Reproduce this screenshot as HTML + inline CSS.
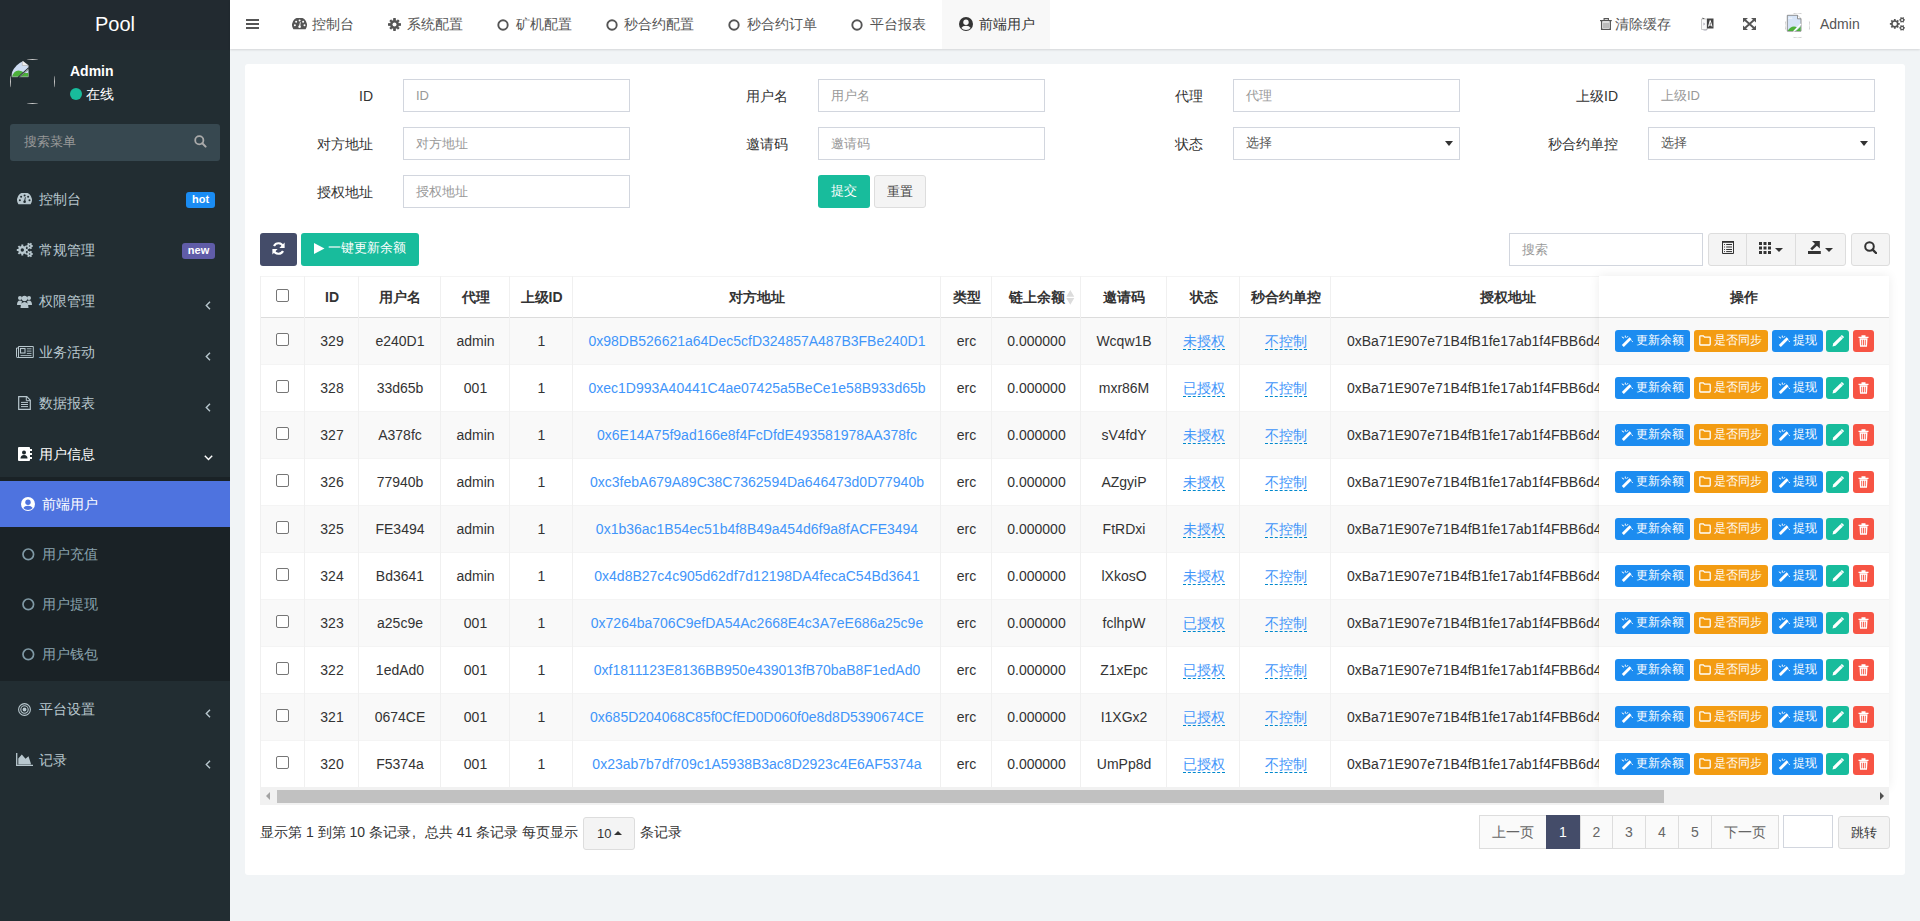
<!DOCTYPE html>
<html><head><meta charset="utf-8">
<style>
*{box-sizing:border-box;margin:0;padding:0}
html,body{width:1920px;height:921px;overflow:hidden}
body{font-family:"Liberation Sans",sans-serif;font-size:14px;color:#333;background:#f1f4f6;position:relative}
.a{position:absolute;white-space:nowrap}
svg{display:block}
/* sidebar */
#sb{position:absolute;left:0;top:0;width:230px;height:921px;background:#222d32}
#logo{position:absolute;left:0;top:0;width:230px;height:50px;background:#222a30;color:#fff;font-size:20px;text-align:center;line-height:48px}
.mi{position:absolute;left:0;width:230px;color:#b8c7ce;font-size:14px;line-height:20px}
.mi .t{position:absolute;left:39px;top:0}
.mi .ic{position:absolute;left:17px;top:3px}
.mi .ar{position:absolute;left:205px;top:10px}
.badge{position:absolute;color:#fff;font-size:11px;font-weight:bold;text-align:center;border-radius:3px;line-height:14px;height:16px}
/* header */
#hd{position:absolute;left:230px;top:0;width:1690px;height:49px;background:#fff;box-shadow:0 1px 2px rgba(0,0,0,.12)}
.hdt{top:14px;color:#555;font-size:14px;line-height:20px}
.tab{position:absolute;top:0;height:50px;color:#666;font-size:14px;line-height:50px}
/* panel */
#pn{position:absolute;left:245px;top:64px;width:1660px;height:811px;background:#fff;border-radius:3px}
.lbl{position:absolute;color:#333;font-size:14px;text-align:right;line-height:20px}
.inp{position:absolute;width:227px;height:33px;border:1px solid #d2d6de;background:#fff;color:#999;font-size:13px;line-height:31px;padding-left:12px}
.btn{border-radius:3px;text-align:center;line-height:31px;font-size:13px}
.th{text-align:center;font-weight:bold;color:#333;font-size:14px;line-height:20px}
.td{text-align:center;color:#333;font-size:14px;line-height:20px}
.link{color:#3f95fa}
.dl{color:#3f95fa;border-bottom:1px dashed #0088cc}
.cb{width:13px;height:13px;border:1px solid #767676;border-radius:2px;background:#fff}
.ob{position:absolute;height:22px;border-radius:3px;color:#fff;font-size:12px;line-height:22px}
.ob span{position:absolute;top:-1px}
.oi{position:absolute}
.pgb{top:815px;height:34px;border:1px solid #ddd;background:#fafafa;color:#666;text-align:center;line-height:32px;font-size:14px}
</style></head><body>
<div id="sb">
  <div id="logo">Pool</div>
  <!-- user panel -->
  <div class="a" style="left:10px;top:59px;width:45px;height:45px;border-radius:50%;overflow:hidden">
    <svg width="45" height="45" viewBox="0 0 45 45"><g stroke="#c8c8c8" stroke-width="1"><path d="M16.5 0.5H28.5M16.5 44.5H28.5"/><path d="M0.5 16.5V28.5M44.5 16.5V28.5"/></g><path d="M1.9 17.8V8 Q4 3.5 10 1.7 H12.3 L18.3 6.5 V17.8Z" fill="#cddcf2" stroke="#aaa" stroke-width="0.6"/><path d="M12.3 1.7 V6.5 H18.3" fill="#eee" stroke="#aaa" stroke-width="0.6"/><path d="M2 17.6 Q4 11.5 8.5 11.5 Q12 11.5 14.5 14 L18.2 14 V17.6Z" fill="#4caf3a"/><path d="M8 18.8 L19 8.8" stroke="#222d32" stroke-width="1.6"/><path d="M9.6 17.8 L18.3 9.9" stroke="#ddd" stroke-width="0.6"/></svg>
  </div>
  <div class="a" style="left:70px;top:62px;color:#fff;font-weight:bold;font-size:14px;line-height:18px">Admin</div>
  <div class="a" style="left:70px;top:88px;width:12px;height:12px;border-radius:50%;background:#18bc9c"></div>
  <div class="a" style="left:86px;top:84px;color:#fff;font-size:14px;line-height:20px">在线</div>
  <!-- search -->
  <div class="a" style="left:10px;top:124px;width:210px;height:37px;background:#374850;border-radius:3px"></div>
  <div class="a" style="left:24px;top:132px;color:#999;font-size:13px;line-height:20px">搜索菜单</div>
  <div class="a" style="left:194px;top:135px"><svg width="13" height="13" viewBox="0 0 13 13"><circle cx="5.3" cy="5.3" r="4.1" fill="none" stroke="#aaa" stroke-width="1.8"/><path d="M8.3 8.3 L11.6 11.6" stroke="#aaa" stroke-width="2" stroke-linecap="round"/></svg></div>
  <!-- menu -->
  <div class="mi" style="top:189px">
    <div class="ic" style="left:17px;top:4px"><svg width="15" height="12" viewBox="0 0 15 12"><path d="M1.4 11.3 A7.5 7.5 0 1 1 13.6 11.3 Z" fill="#b8c7ce"/><g fill="#222d32"><circle cx="2.9" cy="7.3" r="1"/><circle cx="4.1" cy="3.8" r="1"/><circle cx="7.6" cy="2.4" r="1"/><circle cx="11.1" cy="3.8" r="1"/><circle cx="12.5" cy="7.3" r="1"/><circle cx="7.6" cy="8.7" r="1.3"/><path d="M7 8.5 L8 4 L8.7 4.2 L8.2 8.7Z"/></g></svg></div>
    <div class="t">控制台</div>
    <div class="badge" style="left:186px;top:3px;width:29px;background:#1a8cf3">hot</div>
  </div>
  <div class="mi" style="top:240px">
    <div class="ic" style="left:16px;top:2px"><svg width="17" height="16" viewBox="0 0 17 16"><path fill-rule="evenodd" d="M10.29 7.04 L11.81 7.02 L11.81 8.98 L10.29 8.96 L9.80 10.14 L10.89 11.20 L9.50 12.59 L8.44 11.50 L7.26 11.99 L7.28 13.51 L5.32 13.51 L5.34 11.99 L4.16 11.50 L3.10 12.59 L1.71 11.20 L2.80 10.14 L2.31 8.96 L0.79 8.98 L0.79 7.02 L2.31 7.04 L2.80 5.86 L1.71 4.80 L3.10 3.41 L4.16 4.50 L5.34 4.01 L5.32 2.49 L7.28 2.49 L7.26 4.01 L8.44 4.50 L9.50 3.41 L10.89 4.80 L9.80 5.86Z M8.00 8.00 A1.7 1.7 0 1 0 4.60 8.00 A1.7 1.7 0 1 0 8.00 8.00Z M15.98 3.23 L16.91 3.21 L16.91 4.79 L15.98 4.77 L15.46 5.67 L15.94 6.47 L14.57 7.26 L14.12 6.45 L13.08 6.45 L12.63 7.26 L11.26 6.47 L11.74 5.67 L11.22 4.77 L10.29 4.79 L10.29 3.21 L11.22 3.23 L11.74 2.33 L11.26 1.53 L12.63 0.74 L13.08 1.55 L14.12 1.55 L14.57 0.74 L15.94 1.53 L15.46 2.33Z M14.40 4.00 A0.8 0.8 0 1 0 12.80 4.00 A0.8 0.8 0 1 0 14.40 4.00Z M15.98 11.23 L16.91 11.21 L16.91 12.79 L15.98 12.77 L15.46 13.67 L15.94 14.47 L14.57 15.26 L14.12 14.45 L13.08 14.45 L12.63 15.26 L11.26 14.47 L11.74 13.67 L11.22 12.77 L10.29 12.79 L10.29 11.21 L11.22 11.23 L11.74 10.33 L11.26 9.53 L12.63 8.74 L13.08 9.55 L14.12 9.55 L14.57 8.74 L15.94 9.53 L15.46 10.33Z M14.40 12.00 A0.8 0.8 0 1 0 12.80 12.00 A0.8 0.8 0 1 0 14.40 12.00Z" fill="#b8c7ce"/></svg></div>
    <div class="t">常规管理</div>
    <div class="badge" style="left:182px;top:3px;width:33px;background:#605ca8">new</div>
  </div>
  <div class="mi" style="top:291px">
    <div class="ic"><svg width="15" height="14" viewBox="0 0 15 14"><circle cx="3" cy="4" r="2" fill="#b8c7ce"/><circle cx="12" cy="4" r="2" fill="#b8c7ce"/><circle cx="7.5" cy="4.5" r="2.8" fill="#b8c7ce"/><path d="M0 11 Q0 6.5 3 6.5 Q4.5 6.5 5 7.5 L4 11Z M15 11 Q15 6.5 12 6.5 Q10.5 6.5 10 7.5 L11 11Z M3.5 14 Q3.5 8 7.5 8 Q11.5 8 11.5 14Z" fill="#b8c7ce"/></svg></div>
    <div class="t">权限管理</div>
    <div class="ar"><svg width="6" height="9" viewBox="0 0 6 9"><path d="M5 0.8 L1.3 4.5 L5 8.2" fill="none" stroke="#b8c7ce" stroke-width="1.4"/></svg></div>
  </div>
  <div class="mi" style="top:342px">
    <div class="ic" style="left:16px;top:4px"><svg width="18" height="12" viewBox="0 0 18 12"><path d="M2.5 0.5H17.3V11.5H1.2Q0.5 11.5 0.5 10.8V2H2.5" fill="none" stroke="#b8c7ce" stroke-width="1"/><path d="M2.5 0.5V11" stroke="#b8c7ce" stroke-width="1"/><rect x="4.5" y="2.5" width="4.5" height="4.5" fill="none" stroke="#b8c7ce" stroke-width="1.1"/><path d="M10.8 2.8H15.5M10.8 5.1H15.5M10.8 7.4H15.5M4.5 9.6H15.5" stroke="#b8c7ce" stroke-width="0.9"/></svg></div>
    <div class="t">业务活动</div>
    <div class="ar"><svg width="6" height="9" viewBox="0 0 6 9"><path d="M5 0.8 L1.3 4.5 L5 8.2" fill="none" stroke="#b8c7ce" stroke-width="1.4"/></svg></div>
  </div>
  <div class="mi" style="top:393px">
    <div class="ic" style="left:18px;top:3px"><svg width="13" height="14" viewBox="0 0 13 14"><path d="M0.7 0.7H8.8L12.3 4.2V13.3H0.7Z" fill="none" stroke="#b8c7ce" stroke-width="1.2"/><path d="M8.3 0.7V4.7H12.3" fill="none" stroke="#b8c7ce" stroke-width="1"/><path d="M3 6.4H10M3 8.5H10M3 10.6H10" stroke="#b8c7ce" stroke-width="1"/></svg></div>
    <div class="t">数据报表</div>
    <div class="ar"><svg width="6" height="9" viewBox="0 0 6 9"><path d="M5 0.8 L1.3 4.5 L5 8.2" fill="none" stroke="#b8c7ce" stroke-width="1.4"/></svg></div>
  </div>
    <div class="a" style="left:0;top:477px;width:230px;height:204px;background:#1a2226"></div>
  <div class="mi" style="top:444px;color:#fff">
    <div class="ic" style="left:18px;top:3px"><svg width="14" height="14" viewBox="0 0 14 14"><rect x="0" y="0" width="12" height="14" rx="1" fill="#fff"/><rect x="12" y="2" width="2" height="2" fill="#fff"/><rect x="12" y="6" width="2" height="2" fill="#fff"/><rect x="12" y="10" width="2" height="2" fill="#fff"/><circle cx="6" cy="5.5" r="2" fill="#1e282c"/><path d="M2.5 11.5 Q2.5 8 6 8 Q9.5 8 9.5 11.5Z" fill="#1e282c"/></svg></div>
    <div class="t">用户信息</div>
    <div class="ar" style="left:204px;top:11px"><svg width="9" height="6" viewBox="0 0 9 6"><path d="M0.8 0.8 L4.5 4.6 L8.2 0.8" fill="none" stroke="#fff" stroke-width="1.4"/></svg></div>
  </div>
  <div class="a" style="left:0;top:481px;width:230px;height:46px;background:#4e73df"></div>
  <div class="mi" style="top:494px;color:#fff">
    <div class="ic" style="left:21px;top:3px"><svg width="14" height="14" viewBox="0 0 14 14"><circle cx="7" cy="7" r="7" fill="#fff"/><circle cx="7" cy="5.2" r="2.7" fill="#4e73df"/><path d="M2.3 11.1 Q3.6 8.7 7 8.7 Q10.4 8.7 11.7 11.1 Q9.9 13.1 7 13.1 Q4.1 13.1 2.3 11.1Z" fill="#4e73df"/></svg></div>
    <div class="t" style="left:42px">前端用户</div>
  </div>
  <div class="mi" style="top:544px;color:#8aa4af">
    <div class="ic" style="left:21px;top:3px"><svg width="14" height="14" viewBox="0 0 14 14"><circle cx="7.3" cy="7.3" r="5.3" fill="none" stroke="#809aa6" stroke-width="1.7"/></svg></div>
    <div class="t" style="left:42px">用户充值</div>
  </div>
  <div class="mi" style="top:594px;color:#8aa4af">
    <div class="ic" style="left:21px;top:3px"><svg width="14" height="14" viewBox="0 0 14 14"><circle cx="7.3" cy="7.3" r="5.3" fill="none" stroke="#809aa6" stroke-width="1.7"/></svg></div>
    <div class="t" style="left:42px">用户提现</div>
  </div>
  <div class="mi" style="top:644px;color:#8aa4af">
    <div class="ic" style="left:21px;top:3px"><svg width="14" height="14" viewBox="0 0 14 14"><circle cx="7.3" cy="7.3" r="5.3" fill="none" stroke="#809aa6" stroke-width="1.7"/></svg></div>
    <div class="t" style="left:42px">用户钱包</div>
  </div>
  <div class="mi" style="top:699px">
    <div class="ic" style="left:18px;top:4px"><svg width="13" height="13" viewBox="0 0 13 13"><circle cx="6.5" cy="6.5" r="5.9" fill="none" stroke="#b8c7ce" stroke-width="1.1"/><circle cx="6.5" cy="6.5" r="3.7" fill="none" stroke="#b8c7ce" stroke-width="1.1"/><circle cx="6.5" cy="6.5" r="1.9" fill="#b8c7ce"/></svg></div>
    <div class="t">平台设置</div>
    <div class="ar"><svg width="6" height="9" viewBox="0 0 6 9"><path d="M5 0.8 L1.3 4.5 L5 8.2" fill="none" stroke="#b8c7ce" stroke-width="1.4"/></svg></div>
  </div>
  <div class="mi" style="top:750px">
    <div class="ic" style="left:16px;top:3px"><svg width="17" height="13" viewBox="0 0 17 13"><path d="M0.7 0V12.3H17" fill="none" stroke="#b8c7ce" stroke-width="1.3"/><path d="M2.3 11.5V5.5L5.8 1.5L9.5 5.8L12.5 3.2L14.8 10.2V11.5Z" fill="#b8c7ce"/></svg></div>
    <div class="t">记录</div>
    <div class="ar"><svg width="6" height="9" viewBox="0 0 6 9"><path d="M5 0.8 L1.3 4.5 L5 8.2" fill="none" stroke="#b8c7ce" stroke-width="1.4"/></svg></div>
  </div>
</div>
<div id="hd"></div>
<div id="hdc">
  <div class="a" style="left:246px;top:19px"><svg width="13" height="10" viewBox="0 0 13 10"><path d="M0 1H13M0 5H13M0 9H13" stroke="#555" stroke-width="2"/></svg></div>
  <div class="a" style="left:292px;top:18px"><svg width="15" height="12" viewBox="0 0 15 12"><path d="M1.4 11.3 A7.5 7.5 0 1 1 13.6 11.3 Z" fill="#555"/><g fill="#fff"><circle cx="2.9" cy="7.3" r="1"/><circle cx="4.1" cy="3.8" r="1"/><circle cx="7.6" cy="2.4" r="1"/><circle cx="11.1" cy="3.8" r="1"/><circle cx="12.5" cy="7.3" r="1"/><circle cx="7.6" cy="8.7" r="1.3"/><path d="M7 8.5 L8 4 L8.7 4.2 L8.2 8.7Z"/></g></svg></div>
  <div class="a hdt" style="left:312px">控制台</div>
  <div class="a" style="left:388px;top:18px"><svg width="13" height="13" viewBox="0 0 13 13"><g fill="#555"><circle cx="6.5" cy="6.5" r="4.6"/><path d="M5.3 0H7.7L8 2.5H5Z M5.3 13H7.7L8 10.5H5Z M0 5.3V7.7L2.5 8V5Z M13 5.3V7.7L10.5 8V5Z" /><path d="M1.9 1.9L3.6 1.5 L4.2 3.4 L3.4 4.2 L1.5 3.6Z M11.1 1.9L11.5 3.6 L9.6 4.2 L8.8 3.4 L9.4 1.5Z M1.9 11.1L1.5 9.4 L3.4 8.8 L4.2 9.6 L3.6 11.5Z M11.1 11.1L9.4 11.5 L8.8 9.6 L9.6 8.8 L11.5 9.4Z"/></g><circle cx="6.5" cy="6.5" r="2" fill="#fff"/></svg></div>
  <div class="a hdt" style="left:407px">系统配置</div>
  <div class="a" style="left:497px;top:19px"><svg width="12" height="12" viewBox="0 0 12 12"><circle cx="6" cy="6" r="4.7" fill="none" stroke="#555" stroke-width="1.9"/></svg></div>
  <div class="a hdt" style="left:516px">矿机配置</div>
  <div class="a" style="left:606px;top:19px"><svg width="12" height="12" viewBox="0 0 12 12"><circle cx="6" cy="6" r="4.7" fill="none" stroke="#555" stroke-width="1.9"/></svg></div>
  <div class="a hdt" style="left:624px">秒合约配置</div>
  <div class="a" style="left:728px;top:19px"><svg width="12" height="12" viewBox="0 0 12 12"><circle cx="6" cy="6" r="4.7" fill="none" stroke="#555" stroke-width="1.9"/></svg></div>
  <div class="a hdt" style="left:747px">秒合约订单</div>
  <div class="a" style="left:851px;top:19px"><svg width="12" height="12" viewBox="0 0 12 12"><circle cx="6" cy="6" r="4.7" fill="none" stroke="#555" stroke-width="1.9"/></svg></div>
  <div class="a hdt" style="left:870px">平台报表</div>
  <div class="a" style="left:942px;top:0;width:108px;height:49px;background:#f8f8f8"></div>
  <div class="a" style="left:959px;top:17px"><svg width="14" height="14" viewBox="0 0 14 14"><circle cx="7" cy="7" r="7" fill="#333"/><circle cx="7" cy="5.2" r="2.7" fill="#f8f8f8"/><path d="M2.3 11.1 Q3.6 8.7 7 8.7 Q10.4 8.7 11.7 11.1 Q9.9 13.1 7 13.1 Q4.1 13.1 2.3 11.1Z" fill="#f8f8f8"/></svg></div>
  <div class="a hdt" style="left:979px;color:#333">前端用户</div>
  <!-- right -->
  <div class="a" style="left:1600px;top:18px"><svg width="12" height="12" viewBox="0 0 12 12"><path d="M4.1 2V0.6H8.4V2" fill="none" stroke="#555" stroke-width="1.1"/><path d="M0 2.6H11.8" stroke="#555" stroke-width="1.2"/><path d="M1.6 3V11.3H10.3V3" fill="none" stroke="#555" stroke-width="1.3"/><path d="M4 4.5V10M6 4.5V10M8 4.5V10" stroke="#555" stroke-width="0.8"/></svg></div>
  <div class="a hdt" style="left:1615px">清除缓存</div>
  <div class="a" style="left:1701px;top:17px"><svg width="13" height="14" viewBox="0 0 13 14"><path d="M0.5 2H6V12.5H0.5Z" fill="#fafafa" stroke="#bbb" stroke-width="0.8"/><path d="M1.5 0.5L4 2H1.5Z" fill="#555"/><path d="M2 6L4 7L2 8" fill="none" stroke="#99a" stroke-width="0.6"/><path d="M6 1.5H12.5V11.5H6Z" fill="#444"/><path d="M7.5 9.5L9.2 3.5L11 9.5M8 8H10.5" fill="none" stroke="#fff" stroke-width="1"/><path d="M2.5 13.2H5.5L6 12" fill="none" stroke="#99a" stroke-width="0.6"/></svg></div>
  <div class="a" style="left:1743px;top:18px"><svg width="13" height="12" viewBox="0 0 13 12"><path d="M2 2L11 10M11 2L2 10" stroke="#555" stroke-width="1.9"/><path d="M0 0H5L0 4.6Z M13 0H8L13 4.6Z M0 12H5L0 7.4Z M13 12H8L13 7.4Z" fill="#555"/></svg></div>
  <div class="a" style="left:1785px;top:13px;width:25px;height:25px"><svg width="25" height="25" viewBox="0 0 25 25"><g fill="none" stroke="#c8c8c8" stroke-width="0.9"><path d="M8.5 0.6 A12 12 0 0 1 16.5 0.6"/><path d="M8.5 24.4 A12 12 0 0 0 16.5 24.4"/><path d="M0.6 8.5 A12 12 0 0 0 0.6 16.5"/><path d="M24.4 8.5 A12 12 0 0 1 24.4 16.5"/></g><path d="M2.3 2.3H12.5L16 5.8V18.2H2.3Z" fill="#d6e4f7" stroke="#777" stroke-width="0.8"/><path d="M12.5 2.3V5.8H16" fill="#fff" stroke="#777" stroke-width="0.8"/><path d="M3 5.5Q4 4 6 5Q6.5 4 7.5 5.5Z" fill="#fff"/><path d="M2.7 18 Q5 13.5 9 13.5 Q11 13.5 12 14.5 L8.5 18Z" fill="#4caf3a"/><path d="M11 18 L15.6 13.5 V18Z" fill="#4caf3a"/><path d="M8.5 18.6 L16 11" stroke="#fff" stroke-width="1.2"/></svg></div>
  <div class="a hdt" style="left:1820px">Admin</div>
  <div class="a" style="left:1889px;top:17px"><svg width="16" height="14" viewBox="0 0 16 14"><path fill-rule="evenodd" d="M9.50 6.01 L10.72 6.02 L10.72 7.78 L9.50 7.79 L9.04 8.89 L9.90 9.76 L8.66 11.00 L7.79 10.14 L6.69 10.60 L6.68 11.82 L4.92 11.82 L4.91 10.60 L3.81 10.14 L2.94 11.00 L1.70 9.76 L2.56 8.89 L2.10 7.79 L0.88 7.78 L0.88 6.02 L2.10 6.01 L2.56 4.91 L1.70 4.04 L2.94 2.80 L3.81 3.66 L4.91 3.20 L4.92 1.98 L6.68 1.98 L6.69 3.20 L7.79 3.66 L8.66 2.80 L9.90 4.04 L9.04 4.91Z M7.90 6.90 A2.1 2.1 0 1 0 3.70 6.90 A2.1 2.1 0 1 0 7.90 6.90Z M15.19 2.22 L15.92 2.22 L15.92 3.58 L15.19 3.58 L14.73 4.37 L15.10 5.00 L13.92 5.68 L13.56 5.05 L12.64 5.05 L12.28 5.68 L11.10 5.00 L11.47 4.37 L11.01 3.58 L10.28 3.58 L10.28 2.22 L11.01 2.22 L11.47 1.43 L11.10 0.80 L12.28 0.12 L12.64 0.75 L13.56 0.75 L13.92 0.12 L15.10 0.80 L14.73 1.43Z M14.10 2.90 A1.0 1.0 0 1 0 12.10 2.90 A1.0 1.0 0 1 0 14.10 2.90Z M15.19 10.22 L15.92 10.22 L15.92 11.58 L15.19 11.58 L14.73 12.37 L15.10 13.00 L13.92 13.68 L13.56 13.05 L12.64 13.05 L12.28 13.68 L11.10 13.00 L11.47 12.37 L11.01 11.58 L10.28 11.58 L10.28 10.22 L11.01 10.22 L11.47 9.43 L11.10 8.80 L12.28 8.12 L12.64 8.75 L13.56 8.75 L13.92 8.12 L15.10 8.80 L14.73 9.43Z M14.10 10.90 A1.0 1.0 0 1 0 12.10 10.90 A1.0 1.0 0 1 0 14.10 10.90Z" fill="#555"/></svg></div>
</div>
<div id="pn"></div>
<div id="pc">
<div class="a lbl" style="left:173px;width:200px;top:86px">ID</div>
<div class="a lbl" style="left:173px;width:200px;top:134px">对方地址</div>
<div class="a lbl" style="left:173px;width:200px;top:182px">授权地址</div>
<div class="a lbl" style="left:588px;width:200px;top:86px">用户名</div>
<div class="a lbl" style="left:588px;width:200px;top:134px">邀请码</div>
<div class="a lbl" style="left:1003px;width:200px;top:86px">代理</div>
<div class="a lbl" style="left:1003px;width:200px;top:134px">状态</div>
<div class="a lbl" style="left:1418px;width:200px;top:86px">上级ID</div>
<div class="a lbl" style="left:1418px;width:200px;top:134px">秒合约单控</div>
<div class="a inp" style="left:403px;top:79px">ID</div>
<div class="a inp" style="left:403px;top:127px">对方地址</div>
<div class="a inp" style="left:403px;top:175px">授权地址</div>
<div class="a inp" style="left:818px;top:79px">用户名</div>
<div class="a inp" style="left:818px;top:127px">邀请码</div>
<div class="a inp" style="left:1233px;top:79px">代理</div>
<div class="a inp" style="left:1648px;top:79px">上级ID</div>
<div class="a inp" style="left:1233px;top:127px;color:#555;line-height:29px">选择</div>
<div class="a" style="left:1445px;top:141px;width:0;height:0;border-left:4px solid transparent;border-right:4px solid transparent;border-top:5px solid #333"></div>
<div class="a inp" style="left:1648px;top:127px;color:#555;line-height:29px">选择</div>
<div class="a" style="left:1860px;top:141px;width:0;height:0;border-left:4px solid transparent;border-right:4px solid transparent;border-top:5px solid #333"></div>
<div class="a btn" style="left:818px;top:175px;width:52px;height:33px;background:#18bc9c;color:#fff">提交</div>
<div class="a btn" style="left:874px;top:175px;width:52px;height:33px;background:#f4f4f4;border:1px solid #ddd;color:#444">重置</div>
<div class="a btn" style="left:260px;top:233px;width:37px;height:33px;background:#444c69"></div>
<div class="a" style="left:272px;top:242px"><svg width="13" height="13" viewBox="0 0 13 13"><path d="M11.2 4.6 A5 5 0 0 0 2 4" fill="none" stroke="#fff" stroke-width="2.2"/><path d="M12.6 0.5 V6 H7.4Z" fill="#fff"/><path d="M1.8 8.4 A5 5 0 0 0 11 9" fill="none" stroke="#fff" stroke-width="2.2"/><path d="M0.4 12.5 V7 H5.6Z" fill="#fff"/></svg></div>
<div class="a btn" style="left:301px;top:233px;width:118px;height:33px;background:#18bc9c"></div>
<div class="a" style="left:314px;top:243px"><svg width="11" height="11" viewBox="0 0 11 11"><path d="M0 0 L10.5 5.5 L0 11Z" fill="#fff"/></svg></div>
<div class="a" style="left:328px;top:238px;color:#fff;font-size:13px;line-height:20px">一键更新余额</div>
<div class="a inp" style="left:1509px;top:233px;width:194px;height:33px">搜索</div>
<div class="a btn" style="left:1708px;top:233px;width:138px;height:33px;background:#f4f4f4;border:1px solid #ddd"></div>
<div class="a" style="left:1746px;top:234px;width:1px;height:31px;background:#ddd"></div>
<div class="a" style="left:1795px;top:234px;width:1px;height:31px;background:#ddd"></div>
<div class="a btn" style="left:1851px;top:233px;width:39px;height:33px;background:#f4f4f4;border:1px solid #ddd"></div>
<div class="a" style="left:1722px;top:241px"><svg width="12" height="13" viewBox="0 0 12 13"><path d="M0.5 0.8V12.5H11.5V0.8" fill="none" stroke="#333" stroke-width="1"/><rect x="0" y="0" width="12" height="1.8" fill="#333"/><path d="M2 3.5H3M2 6H3M2 8.5H3M2 10.6H3" stroke="#333" stroke-width="0.9"/><path d="M4.2 3.5H10M4.2 6H10M4.2 8.5H10M4.2 10.6H10" stroke="#333" stroke-width="1"/></svg></div>
<div class="a" style="left:1759px;top:242px"><svg width="12" height="12" viewBox="0 0 12 12"><g fill="#333"><rect x="0" y="0" width="3" height="3"/><rect x="4.5" y="0" width="3" height="3"/><rect x="9" y="0" width="3" height="3"/><rect x="0" y="4.5" width="3" height="3"/><rect x="4.5" y="4.5" width="3" height="3"/><rect x="9" y="4.5" width="3" height="3"/><rect x="0" y="9" width="3" height="3"/><rect x="4.5" y="9" width="3" height="3"/><rect x="9" y="9" width="3" height="3"/></g></svg></div>
<div class="a" style="left:1775px;top:248px;width:0;height:0;border-left:4px solid transparent;border-right:4px solid transparent;border-top:4px solid #333"></div>
<div class="a" style="left:1808px;top:241px"><svg width="13" height="13" viewBox="0 0 13 13"><path d="M0 10H12.8V13H0Z" fill="#333"/><path d="M4 0H11.8V7.6Z" fill="#333"/><path d="M3.2 8.4L8.5 3.2" stroke="#333" stroke-width="2.6"/></svg></div>
<div class="a" style="left:1825px;top:248px;width:0;height:0;border-left:4px solid transparent;border-right:4px solid transparent;border-top:4px solid #333"></div>
<div class="a" style="left:1864px;top:241px"><svg width="13" height="13" viewBox="0 0 13 13"><circle cx="5.5" cy="5.5" r="4.3" fill="none" stroke="#333" stroke-width="2"/><path d="M8.6 8.6 L12 12" stroke="#333" stroke-width="2.4" stroke-linecap="round"/></svg></div>
<div class="a" style="left:260px;top:276px;width:1629px;height:528px">
<div class="a" style="left:0;top:0;width:1629px;height:41px;background:#fff;border-top:1px solid #f4f4f4"></div>
<div class="a" style="left:0;top:41px;width:1629px;height:47px;background:#f9f9f9;border-top:1px solid #f4f4f4"></div>
<div class="a" style="left:0;top:88px;width:1629px;height:47px;background:#fff;border-top:1px solid #f4f4f4"></div>
<div class="a" style="left:0;top:135px;width:1629px;height:47px;background:#f9f9f9;border-top:1px solid #f4f4f4"></div>
<div class="a" style="left:0;top:182px;width:1629px;height:47px;background:#fff;border-top:1px solid #f4f4f4"></div>
<div class="a" style="left:0;top:229px;width:1629px;height:47px;background:#f9f9f9;border-top:1px solid #f4f4f4"></div>
<div class="a" style="left:0;top:276px;width:1629px;height:47px;background:#fff;border-top:1px solid #f4f4f4"></div>
<div class="a" style="left:0;top:323px;width:1629px;height:47px;background:#f9f9f9;border-top:1px solid #f4f4f4"></div>
<div class="a" style="left:0;top:370px;width:1629px;height:47px;background:#fff;border-top:1px solid #f4f4f4"></div>
<div class="a" style="left:0;top:417px;width:1629px;height:47px;background:#f9f9f9;border-top:1px solid #f4f4f4"></div>
<div class="a" style="left:0;top:464px;width:1629px;height:47px;background:#fff;border-top:1px solid #f4f4f4"></div>
<div class="a" style="left:0;top:41px;width:1629px;height:1px;background:#dcdcdc"></div>
<div class="a" style="left:0px;top:0;width:1px;height:511px;background:#f0f0f0"></div>
<div class="a" style="left:44px;top:0;width:1px;height:511px;background:#f0f0f0"></div>
<div class="a" style="left:98px;top:0;width:1px;height:511px;background:#f0f0f0"></div>
<div class="a" style="left:180px;top:0;width:1px;height:511px;background:#f0f0f0"></div>
<div class="a" style="left:249px;top:0;width:1px;height:511px;background:#f0f0f0"></div>
<div class="a" style="left:312px;top:0;width:1px;height:511px;background:#f0f0f0"></div>
<div class="a" style="left:680px;top:0;width:1px;height:511px;background:#f0f0f0"></div>
<div class="a" style="left:731px;top:0;width:1px;height:511px;background:#f0f0f0"></div>
<div class="a" style="left:820px;top:0;width:1px;height:511px;background:#f0f0f0"></div>
<div class="a" style="left:906px;top:0;width:1px;height:511px;background:#f0f0f0"></div>
<div class="a" style="left:979px;top:0;width:1px;height:511px;background:#f0f0f0"></div>
<div class="a" style="left:1070px;top:0;width:1px;height:511px;background:#f0f0f0"></div>
<div class="a th" style="left:45px;width:54px;top:11px">ID</div>
<div class="a th" style="left:99px;width:82px;top:11px">用户名</div>
<div class="a th" style="left:181px;width:69px;top:11px">代理</div>
<div class="a th" style="left:250px;width:63px;top:11px">上级ID</div>
<div class="a th" style="left:313px;width:368px;top:11px">对方地址</div>
<div class="a th" style="left:681px;width:51px;top:11px">类型</div>
<div class="a th" style="left:732px;width:89px;top:11px">链上余额</div>
<div class="a th" style="left:821px;width:86px;top:11px">邀请码</div>
<div class="a th" style="left:907px;width:73px;top:11px">状态</div>
<div class="a th" style="left:980px;width:91px;top:11px">秒合约单控</div>
<div class="a th" style="left:1071px;width:354px;top:11px">授权地址</div>
<div class="a cb" style="left:16px;top:13px"></div>
<div class="a" style="left:806px;top:14px"><svg width="9" height="15" viewBox="0 0 9 15"><path d="M0.3 6.8L4.3 0L8.3 6.8Z M0.3 8L8.3 8L4.3 14.8Z" fill="#dcdcdc"/></svg></div>
<div class="a cb" style="left:16px;top:57px"></div>
<div class="a td" style="left:45px;width:54px;top:55px">329</div>
<div class="a td" style="left:99px;width:82px;top:55px">e240D1</div>
<div class="a td" style="left:181px;width:69px;top:55px">admin</div>
<div class="a td" style="left:250px;width:63px;top:55px">1</div>
<div class="a td link" style="left:313px;width:368px;top:55px">0x98DB526621a64Dec5cfD324857A487B3FBe240D1</div>
<div class="a td" style="left:681px;width:51px;top:55px">erc</div>
<div class="a td" style="left:732px;width:89px;top:55px">0.000000</div>
<div class="a td" style="left:821px;width:86px;top:55px">Wcqw1B</div>
<div class="a td" style="left:907px;width:73px;top:55px"><span class="dl">未授权</span></div>
<div class="a td" style="left:980px;width:91px;top:55px"><span class="dl">不控制</span></div>
<div class="a td" style="left:1087px;top:55px;text-align:left">0xBa71E907e71B4fB1fe17ab1f4FBB6d4D2a1c7E9f</div>
<div class="a cb" style="left:16px;top:104px"></div>
<div class="a td" style="left:45px;width:54px;top:102px">328</div>
<div class="a td" style="left:99px;width:82px;top:102px">33d65b</div>
<div class="a td" style="left:181px;width:69px;top:102px">001</div>
<div class="a td" style="left:250px;width:63px;top:102px">1</div>
<div class="a td link" style="left:313px;width:368px;top:102px">0xec1D993A40441C4ae07425a5BeCe1e58B933d65b</div>
<div class="a td" style="left:681px;width:51px;top:102px">erc</div>
<div class="a td" style="left:732px;width:89px;top:102px">0.000000</div>
<div class="a td" style="left:821px;width:86px;top:102px">mxr86M</div>
<div class="a td" style="left:907px;width:73px;top:102px"><span class="dl">已授权</span></div>
<div class="a td" style="left:980px;width:91px;top:102px"><span class="dl">不控制</span></div>
<div class="a td" style="left:1087px;top:102px;text-align:left">0xBa71E907e71B4fB1fe17ab1f4FBB6d4D2a1c7E9f</div>
<div class="a cb" style="left:16px;top:151px"></div>
<div class="a td" style="left:45px;width:54px;top:149px">327</div>
<div class="a td" style="left:99px;width:82px;top:149px">A378fc</div>
<div class="a td" style="left:181px;width:69px;top:149px">admin</div>
<div class="a td" style="left:250px;width:63px;top:149px">1</div>
<div class="a td link" style="left:313px;width:368px;top:149px">0x6E14A75f9ad166e8f4FcDfdE493581978AA378fc</div>
<div class="a td" style="left:681px;width:51px;top:149px">erc</div>
<div class="a td" style="left:732px;width:89px;top:149px">0.000000</div>
<div class="a td" style="left:821px;width:86px;top:149px">sV4fdY</div>
<div class="a td" style="left:907px;width:73px;top:149px"><span class="dl">未授权</span></div>
<div class="a td" style="left:980px;width:91px;top:149px"><span class="dl">不控制</span></div>
<div class="a td" style="left:1087px;top:149px;text-align:left">0xBa71E907e71B4fB1fe17ab1f4FBB6d4D2a1c7E9f</div>
<div class="a cb" style="left:16px;top:198px"></div>
<div class="a td" style="left:45px;width:54px;top:196px">326</div>
<div class="a td" style="left:99px;width:82px;top:196px">77940b</div>
<div class="a td" style="left:181px;width:69px;top:196px">admin</div>
<div class="a td" style="left:250px;width:63px;top:196px">1</div>
<div class="a td link" style="left:313px;width:368px;top:196px">0xc3febA679A89C38C7362594Da646473d0D77940b</div>
<div class="a td" style="left:681px;width:51px;top:196px">erc</div>
<div class="a td" style="left:732px;width:89px;top:196px">0.000000</div>
<div class="a td" style="left:821px;width:86px;top:196px">AZgyiP</div>
<div class="a td" style="left:907px;width:73px;top:196px"><span class="dl">未授权</span></div>
<div class="a td" style="left:980px;width:91px;top:196px"><span class="dl">不控制</span></div>
<div class="a td" style="left:1087px;top:196px;text-align:left">0xBa71E907e71B4fB1fe17ab1f4FBB6d4D2a1c7E9f</div>
<div class="a cb" style="left:16px;top:245px"></div>
<div class="a td" style="left:45px;width:54px;top:243px">325</div>
<div class="a td" style="left:99px;width:82px;top:243px">FE3494</div>
<div class="a td" style="left:181px;width:69px;top:243px">admin</div>
<div class="a td" style="left:250px;width:63px;top:243px">1</div>
<div class="a td link" style="left:313px;width:368px;top:243px">0x1b36ac1B54ec51b4f8B49a454d6f9a8fACFE3494</div>
<div class="a td" style="left:681px;width:51px;top:243px">erc</div>
<div class="a td" style="left:732px;width:89px;top:243px">0.000000</div>
<div class="a td" style="left:821px;width:86px;top:243px">FtRDxi</div>
<div class="a td" style="left:907px;width:73px;top:243px"><span class="dl">未授权</span></div>
<div class="a td" style="left:980px;width:91px;top:243px"><span class="dl">不控制</span></div>
<div class="a td" style="left:1087px;top:243px;text-align:left">0xBa71E907e71B4fB1fe17ab1f4FBB6d4D2a1c7E9f</div>
<div class="a cb" style="left:16px;top:292px"></div>
<div class="a td" style="left:45px;width:54px;top:290px">324</div>
<div class="a td" style="left:99px;width:82px;top:290px">Bd3641</div>
<div class="a td" style="left:181px;width:69px;top:290px">admin</div>
<div class="a td" style="left:250px;width:63px;top:290px">1</div>
<div class="a td link" style="left:313px;width:368px;top:290px">0x4d8B27c4c905d62df7d12198DA4fecaC54Bd3641</div>
<div class="a td" style="left:681px;width:51px;top:290px">erc</div>
<div class="a td" style="left:732px;width:89px;top:290px">0.000000</div>
<div class="a td" style="left:821px;width:86px;top:290px">lXkosO</div>
<div class="a td" style="left:907px;width:73px;top:290px"><span class="dl">未授权</span></div>
<div class="a td" style="left:980px;width:91px;top:290px"><span class="dl">不控制</span></div>
<div class="a td" style="left:1087px;top:290px;text-align:left">0xBa71E907e71B4fB1fe17ab1f4FBB6d4D2a1c7E9f</div>
<div class="a cb" style="left:16px;top:339px"></div>
<div class="a td" style="left:45px;width:54px;top:337px">323</div>
<div class="a td" style="left:99px;width:82px;top:337px">a25c9e</div>
<div class="a td" style="left:181px;width:69px;top:337px">001</div>
<div class="a td" style="left:250px;width:63px;top:337px">1</div>
<div class="a td link" style="left:313px;width:368px;top:337px">0x7264ba706C9efDA54Ac2668E4c3A7eE686a25c9e</div>
<div class="a td" style="left:681px;width:51px;top:337px">erc</div>
<div class="a td" style="left:732px;width:89px;top:337px">0.000000</div>
<div class="a td" style="left:821px;width:86px;top:337px">fclhpW</div>
<div class="a td" style="left:907px;width:73px;top:337px"><span class="dl">已授权</span></div>
<div class="a td" style="left:980px;width:91px;top:337px"><span class="dl">不控制</span></div>
<div class="a td" style="left:1087px;top:337px;text-align:left">0xBa71E907e71B4fB1fe17ab1f4FBB6d4D2a1c7E9f</div>
<div class="a cb" style="left:16px;top:386px"></div>
<div class="a td" style="left:45px;width:54px;top:384px">322</div>
<div class="a td" style="left:99px;width:82px;top:384px">1edAd0</div>
<div class="a td" style="left:181px;width:69px;top:384px">001</div>
<div class="a td" style="left:250px;width:63px;top:384px">1</div>
<div class="a td link" style="left:313px;width:368px;top:384px">0xf1811123E8136BB950e439013fB70baB8F1edAd0</div>
<div class="a td" style="left:681px;width:51px;top:384px">erc</div>
<div class="a td" style="left:732px;width:89px;top:384px">0.000000</div>
<div class="a td" style="left:821px;width:86px;top:384px">Z1xEpc</div>
<div class="a td" style="left:907px;width:73px;top:384px"><span class="dl">已授权</span></div>
<div class="a td" style="left:980px;width:91px;top:384px"><span class="dl">不控制</span></div>
<div class="a td" style="left:1087px;top:384px;text-align:left">0xBa71E907e71B4fB1fe17ab1f4FBB6d4D2a1c7E9f</div>
<div class="a cb" style="left:16px;top:433px"></div>
<div class="a td" style="left:45px;width:54px;top:431px">321</div>
<div class="a td" style="left:99px;width:82px;top:431px">0674CE</div>
<div class="a td" style="left:181px;width:69px;top:431px">001</div>
<div class="a td" style="left:250px;width:63px;top:431px">1</div>
<div class="a td link" style="left:313px;width:368px;top:431px">0x685D204068C85f0CfED0D060f0e8d8D5390674CE</div>
<div class="a td" style="left:681px;width:51px;top:431px">erc</div>
<div class="a td" style="left:732px;width:89px;top:431px">0.000000</div>
<div class="a td" style="left:821px;width:86px;top:431px">I1XGx2</div>
<div class="a td" style="left:907px;width:73px;top:431px"><span class="dl">已授权</span></div>
<div class="a td" style="left:980px;width:91px;top:431px"><span class="dl">不控制</span></div>
<div class="a td" style="left:1087px;top:431px;text-align:left">0xBa71E907e71B4fB1fe17ab1f4FBB6d4D2a1c7E9f</div>
<div class="a cb" style="left:16px;top:480px"></div>
<div class="a td" style="left:45px;width:54px;top:478px">320</div>
<div class="a td" style="left:99px;width:82px;top:478px">F5374a</div>
<div class="a td" style="left:181px;width:69px;top:478px">001</div>
<div class="a td" style="left:250px;width:63px;top:478px">1</div>
<div class="a td link" style="left:313px;width:368px;top:478px">0x23ab7b7df709c1A5938B3ac8D2923c4E6AF5374a</div>
<div class="a td" style="left:681px;width:51px;top:478px">erc</div>
<div class="a td" style="left:732px;width:89px;top:478px">0.000000</div>
<div class="a td" style="left:821px;width:86px;top:478px">UmPp8d</div>
<div class="a td" style="left:907px;width:73px;top:478px"><span class="dl">已授权</span></div>
<div class="a td" style="left:980px;width:91px;top:478px"><span class="dl">不控制</span></div>
<div class="a td" style="left:1087px;top:478px;text-align:left">0xBa71E907e71B4fB1fe17ab1f4FBB6d4D2a1c7E9f</div>
<div class="a" style="left:1339px;top:0;width:290px;height:511px;box-shadow:0 0 10px rgba(0,0,0,.08);background:#fff">
<div class="a" style="left:0;top:0;width:290px;height:41px;background:#fff"></div>
<div class="a" style="left:0;top:41px;width:290px;height:47px;background:#f9f9f9;border-top:1px solid #f4f4f4"></div>
<div class="a" style="left:0;top:88px;width:290px;height:47px;background:#fff;border-top:1px solid #f4f4f4"></div>
<div class="a" style="left:0;top:135px;width:290px;height:47px;background:#f9f9f9;border-top:1px solid #f4f4f4"></div>
<div class="a" style="left:0;top:182px;width:290px;height:47px;background:#fff;border-top:1px solid #f4f4f4"></div>
<div class="a" style="left:0;top:229px;width:290px;height:47px;background:#f9f9f9;border-top:1px solid #f4f4f4"></div>
<div class="a" style="left:0;top:276px;width:290px;height:47px;background:#fff;border-top:1px solid #f4f4f4"></div>
<div class="a" style="left:0;top:323px;width:290px;height:47px;background:#f9f9f9;border-top:1px solid #f4f4f4"></div>
<div class="a" style="left:0;top:370px;width:290px;height:47px;background:#fff;border-top:1px solid #f4f4f4"></div>
<div class="a" style="left:0;top:417px;width:290px;height:47px;background:#f9f9f9;border-top:1px solid #f4f4f4"></div>
<div class="a" style="left:0;top:464px;width:290px;height:47px;background:#fff;border-top:1px solid #f4f4f4"></div>
<div class="a" style="left:0;top:41px;width:290px;height:1px;background:#dcdcdc"></div>
<div class="a th" style="left:0;width:290px;top:11px">操作</div>
<div class="a ob" style="left:16px;top:54px;width:75px;background:#1c8cf0"><svg class="oi" style="left:6px;top:5px" width="13" height="12" viewBox="0 0 13 12"><path d="M1.8 11 L9.6 3.2" stroke="#fff" stroke-width="2.8"/><path d="M0.8 1.8L3 3.2M4.3 0.6V2.6M7 1.2L5.6 2.8M10.4 5.6L11.8 6.8" stroke="#fff" stroke-width="1"/></svg><span style="left:21px">更新余额</span></div>
<div class="a ob" style="left:95px;top:54px;width:74px;background:#f39c12"><svg class="oi" style="left:5px;top:5px" width="12" height="11" viewBox="0 0 12 11"><path d="M0.8 1.5Q0.8 0.8 1.5 0.8H4.3L5.6 2.2H10.5Q11.2 2.2 11.2 2.9V9.3Q11.2 10 10.5 10H1.5Q0.8 10 0.8 9.3Z" fill="none" stroke="#fff" stroke-width="1.3"/></svg><span style="left:20px">是否同步</span></div>
<div class="a ob" style="left:173px;top:54px;width:51px;background:#1c8cf0"><svg class="oi" style="left:6px;top:5px" width="13" height="12" viewBox="0 0 13 12"><path d="M1.8 11 L9.6 3.2" stroke="#fff" stroke-width="2.8"/><path d="M0.8 1.8L3 3.2M4.3 0.6V2.6M7 1.2L5.6 2.8M10.4 5.6L11.8 6.8" stroke="#fff" stroke-width="1"/></svg><span style="left:21px">提现</span></div>
<div class="a ob" style="left:227px;top:54px;width:23px;background:#18bc9c"><svg class="oi" style="left:6px;top:5px" width="12" height="12" viewBox="0 0 12 12"><path d="M0.5 11.5L1.2 8.5L8.5 1.2L10.8 3.5L3.5 10.8Z" fill="#fff"/><path d="M9.3 0.5L11.5 2.7" stroke="#fff" stroke-width="1.6"/></svg></div>
<div class="a ob" style="left:254px;top:54px;width:21px;background:#f75444"><svg class="oi" style="left:5px;top:5px" width="11" height="12" viewBox="0 0 11 12"><path d="M0.5 1.8H10.5V3H0.5Z M3.5 0.3H7.5V1.8H3.5Z M1.5 3.3H9.5L9 11.8H2Z" fill="#fff"/><path d="M3.7 4.8V10.3M5.5 4.8V10.3M7.3 4.8V10.3" stroke="#f75444" stroke-width="0.9"/></svg></div>
<div class="a ob" style="left:16px;top:101px;width:75px;background:#1c8cf0"><svg class="oi" style="left:6px;top:5px" width="13" height="12" viewBox="0 0 13 12"><path d="M1.8 11 L9.6 3.2" stroke="#fff" stroke-width="2.8"/><path d="M0.8 1.8L3 3.2M4.3 0.6V2.6M7 1.2L5.6 2.8M10.4 5.6L11.8 6.8" stroke="#fff" stroke-width="1"/></svg><span style="left:21px">更新余额</span></div>
<div class="a ob" style="left:95px;top:101px;width:74px;background:#f39c12"><svg class="oi" style="left:5px;top:5px" width="12" height="11" viewBox="0 0 12 11"><path d="M0.8 1.5Q0.8 0.8 1.5 0.8H4.3L5.6 2.2H10.5Q11.2 2.2 11.2 2.9V9.3Q11.2 10 10.5 10H1.5Q0.8 10 0.8 9.3Z" fill="none" stroke="#fff" stroke-width="1.3"/></svg><span style="left:20px">是否同步</span></div>
<div class="a ob" style="left:173px;top:101px;width:51px;background:#1c8cf0"><svg class="oi" style="left:6px;top:5px" width="13" height="12" viewBox="0 0 13 12"><path d="M1.8 11 L9.6 3.2" stroke="#fff" stroke-width="2.8"/><path d="M0.8 1.8L3 3.2M4.3 0.6V2.6M7 1.2L5.6 2.8M10.4 5.6L11.8 6.8" stroke="#fff" stroke-width="1"/></svg><span style="left:21px">提现</span></div>
<div class="a ob" style="left:227px;top:101px;width:23px;background:#18bc9c"><svg class="oi" style="left:6px;top:5px" width="12" height="12" viewBox="0 0 12 12"><path d="M0.5 11.5L1.2 8.5L8.5 1.2L10.8 3.5L3.5 10.8Z" fill="#fff"/><path d="M9.3 0.5L11.5 2.7" stroke="#fff" stroke-width="1.6"/></svg></div>
<div class="a ob" style="left:254px;top:101px;width:21px;background:#f75444"><svg class="oi" style="left:5px;top:5px" width="11" height="12" viewBox="0 0 11 12"><path d="M0.5 1.8H10.5V3H0.5Z M3.5 0.3H7.5V1.8H3.5Z M1.5 3.3H9.5L9 11.8H2Z" fill="#fff"/><path d="M3.7 4.8V10.3M5.5 4.8V10.3M7.3 4.8V10.3" stroke="#f75444" stroke-width="0.9"/></svg></div>
<div class="a ob" style="left:16px;top:148px;width:75px;background:#1c8cf0"><svg class="oi" style="left:6px;top:5px" width="13" height="12" viewBox="0 0 13 12"><path d="M1.8 11 L9.6 3.2" stroke="#fff" stroke-width="2.8"/><path d="M0.8 1.8L3 3.2M4.3 0.6V2.6M7 1.2L5.6 2.8M10.4 5.6L11.8 6.8" stroke="#fff" stroke-width="1"/></svg><span style="left:21px">更新余额</span></div>
<div class="a ob" style="left:95px;top:148px;width:74px;background:#f39c12"><svg class="oi" style="left:5px;top:5px" width="12" height="11" viewBox="0 0 12 11"><path d="M0.8 1.5Q0.8 0.8 1.5 0.8H4.3L5.6 2.2H10.5Q11.2 2.2 11.2 2.9V9.3Q11.2 10 10.5 10H1.5Q0.8 10 0.8 9.3Z" fill="none" stroke="#fff" stroke-width="1.3"/></svg><span style="left:20px">是否同步</span></div>
<div class="a ob" style="left:173px;top:148px;width:51px;background:#1c8cf0"><svg class="oi" style="left:6px;top:5px" width="13" height="12" viewBox="0 0 13 12"><path d="M1.8 11 L9.6 3.2" stroke="#fff" stroke-width="2.8"/><path d="M0.8 1.8L3 3.2M4.3 0.6V2.6M7 1.2L5.6 2.8M10.4 5.6L11.8 6.8" stroke="#fff" stroke-width="1"/></svg><span style="left:21px">提现</span></div>
<div class="a ob" style="left:227px;top:148px;width:23px;background:#18bc9c"><svg class="oi" style="left:6px;top:5px" width="12" height="12" viewBox="0 0 12 12"><path d="M0.5 11.5L1.2 8.5L8.5 1.2L10.8 3.5L3.5 10.8Z" fill="#fff"/><path d="M9.3 0.5L11.5 2.7" stroke="#fff" stroke-width="1.6"/></svg></div>
<div class="a ob" style="left:254px;top:148px;width:21px;background:#f75444"><svg class="oi" style="left:5px;top:5px" width="11" height="12" viewBox="0 0 11 12"><path d="M0.5 1.8H10.5V3H0.5Z M3.5 0.3H7.5V1.8H3.5Z M1.5 3.3H9.5L9 11.8H2Z" fill="#fff"/><path d="M3.7 4.8V10.3M5.5 4.8V10.3M7.3 4.8V10.3" stroke="#f75444" stroke-width="0.9"/></svg></div>
<div class="a ob" style="left:16px;top:195px;width:75px;background:#1c8cf0"><svg class="oi" style="left:6px;top:5px" width="13" height="12" viewBox="0 0 13 12"><path d="M1.8 11 L9.6 3.2" stroke="#fff" stroke-width="2.8"/><path d="M0.8 1.8L3 3.2M4.3 0.6V2.6M7 1.2L5.6 2.8M10.4 5.6L11.8 6.8" stroke="#fff" stroke-width="1"/></svg><span style="left:21px">更新余额</span></div>
<div class="a ob" style="left:95px;top:195px;width:74px;background:#f39c12"><svg class="oi" style="left:5px;top:5px" width="12" height="11" viewBox="0 0 12 11"><path d="M0.8 1.5Q0.8 0.8 1.5 0.8H4.3L5.6 2.2H10.5Q11.2 2.2 11.2 2.9V9.3Q11.2 10 10.5 10H1.5Q0.8 10 0.8 9.3Z" fill="none" stroke="#fff" stroke-width="1.3"/></svg><span style="left:20px">是否同步</span></div>
<div class="a ob" style="left:173px;top:195px;width:51px;background:#1c8cf0"><svg class="oi" style="left:6px;top:5px" width="13" height="12" viewBox="0 0 13 12"><path d="M1.8 11 L9.6 3.2" stroke="#fff" stroke-width="2.8"/><path d="M0.8 1.8L3 3.2M4.3 0.6V2.6M7 1.2L5.6 2.8M10.4 5.6L11.8 6.8" stroke="#fff" stroke-width="1"/></svg><span style="left:21px">提现</span></div>
<div class="a ob" style="left:227px;top:195px;width:23px;background:#18bc9c"><svg class="oi" style="left:6px;top:5px" width="12" height="12" viewBox="0 0 12 12"><path d="M0.5 11.5L1.2 8.5L8.5 1.2L10.8 3.5L3.5 10.8Z" fill="#fff"/><path d="M9.3 0.5L11.5 2.7" stroke="#fff" stroke-width="1.6"/></svg></div>
<div class="a ob" style="left:254px;top:195px;width:21px;background:#f75444"><svg class="oi" style="left:5px;top:5px" width="11" height="12" viewBox="0 0 11 12"><path d="M0.5 1.8H10.5V3H0.5Z M3.5 0.3H7.5V1.8H3.5Z M1.5 3.3H9.5L9 11.8H2Z" fill="#fff"/><path d="M3.7 4.8V10.3M5.5 4.8V10.3M7.3 4.8V10.3" stroke="#f75444" stroke-width="0.9"/></svg></div>
<div class="a ob" style="left:16px;top:242px;width:75px;background:#1c8cf0"><svg class="oi" style="left:6px;top:5px" width="13" height="12" viewBox="0 0 13 12"><path d="M1.8 11 L9.6 3.2" stroke="#fff" stroke-width="2.8"/><path d="M0.8 1.8L3 3.2M4.3 0.6V2.6M7 1.2L5.6 2.8M10.4 5.6L11.8 6.8" stroke="#fff" stroke-width="1"/></svg><span style="left:21px">更新余额</span></div>
<div class="a ob" style="left:95px;top:242px;width:74px;background:#f39c12"><svg class="oi" style="left:5px;top:5px" width="12" height="11" viewBox="0 0 12 11"><path d="M0.8 1.5Q0.8 0.8 1.5 0.8H4.3L5.6 2.2H10.5Q11.2 2.2 11.2 2.9V9.3Q11.2 10 10.5 10H1.5Q0.8 10 0.8 9.3Z" fill="none" stroke="#fff" stroke-width="1.3"/></svg><span style="left:20px">是否同步</span></div>
<div class="a ob" style="left:173px;top:242px;width:51px;background:#1c8cf0"><svg class="oi" style="left:6px;top:5px" width="13" height="12" viewBox="0 0 13 12"><path d="M1.8 11 L9.6 3.2" stroke="#fff" stroke-width="2.8"/><path d="M0.8 1.8L3 3.2M4.3 0.6V2.6M7 1.2L5.6 2.8M10.4 5.6L11.8 6.8" stroke="#fff" stroke-width="1"/></svg><span style="left:21px">提现</span></div>
<div class="a ob" style="left:227px;top:242px;width:23px;background:#18bc9c"><svg class="oi" style="left:6px;top:5px" width="12" height="12" viewBox="0 0 12 12"><path d="M0.5 11.5L1.2 8.5L8.5 1.2L10.8 3.5L3.5 10.8Z" fill="#fff"/><path d="M9.3 0.5L11.5 2.7" stroke="#fff" stroke-width="1.6"/></svg></div>
<div class="a ob" style="left:254px;top:242px;width:21px;background:#f75444"><svg class="oi" style="left:5px;top:5px" width="11" height="12" viewBox="0 0 11 12"><path d="M0.5 1.8H10.5V3H0.5Z M3.5 0.3H7.5V1.8H3.5Z M1.5 3.3H9.5L9 11.8H2Z" fill="#fff"/><path d="M3.7 4.8V10.3M5.5 4.8V10.3M7.3 4.8V10.3" stroke="#f75444" stroke-width="0.9"/></svg></div>
<div class="a ob" style="left:16px;top:289px;width:75px;background:#1c8cf0"><svg class="oi" style="left:6px;top:5px" width="13" height="12" viewBox="0 0 13 12"><path d="M1.8 11 L9.6 3.2" stroke="#fff" stroke-width="2.8"/><path d="M0.8 1.8L3 3.2M4.3 0.6V2.6M7 1.2L5.6 2.8M10.4 5.6L11.8 6.8" stroke="#fff" stroke-width="1"/></svg><span style="left:21px">更新余额</span></div>
<div class="a ob" style="left:95px;top:289px;width:74px;background:#f39c12"><svg class="oi" style="left:5px;top:5px" width="12" height="11" viewBox="0 0 12 11"><path d="M0.8 1.5Q0.8 0.8 1.5 0.8H4.3L5.6 2.2H10.5Q11.2 2.2 11.2 2.9V9.3Q11.2 10 10.5 10H1.5Q0.8 10 0.8 9.3Z" fill="none" stroke="#fff" stroke-width="1.3"/></svg><span style="left:20px">是否同步</span></div>
<div class="a ob" style="left:173px;top:289px;width:51px;background:#1c8cf0"><svg class="oi" style="left:6px;top:5px" width="13" height="12" viewBox="0 0 13 12"><path d="M1.8 11 L9.6 3.2" stroke="#fff" stroke-width="2.8"/><path d="M0.8 1.8L3 3.2M4.3 0.6V2.6M7 1.2L5.6 2.8M10.4 5.6L11.8 6.8" stroke="#fff" stroke-width="1"/></svg><span style="left:21px">提现</span></div>
<div class="a ob" style="left:227px;top:289px;width:23px;background:#18bc9c"><svg class="oi" style="left:6px;top:5px" width="12" height="12" viewBox="0 0 12 12"><path d="M0.5 11.5L1.2 8.5L8.5 1.2L10.8 3.5L3.5 10.8Z" fill="#fff"/><path d="M9.3 0.5L11.5 2.7" stroke="#fff" stroke-width="1.6"/></svg></div>
<div class="a ob" style="left:254px;top:289px;width:21px;background:#f75444"><svg class="oi" style="left:5px;top:5px" width="11" height="12" viewBox="0 0 11 12"><path d="M0.5 1.8H10.5V3H0.5Z M3.5 0.3H7.5V1.8H3.5Z M1.5 3.3H9.5L9 11.8H2Z" fill="#fff"/><path d="M3.7 4.8V10.3M5.5 4.8V10.3M7.3 4.8V10.3" stroke="#f75444" stroke-width="0.9"/></svg></div>
<div class="a ob" style="left:16px;top:336px;width:75px;background:#1c8cf0"><svg class="oi" style="left:6px;top:5px" width="13" height="12" viewBox="0 0 13 12"><path d="M1.8 11 L9.6 3.2" stroke="#fff" stroke-width="2.8"/><path d="M0.8 1.8L3 3.2M4.3 0.6V2.6M7 1.2L5.6 2.8M10.4 5.6L11.8 6.8" stroke="#fff" stroke-width="1"/></svg><span style="left:21px">更新余额</span></div>
<div class="a ob" style="left:95px;top:336px;width:74px;background:#f39c12"><svg class="oi" style="left:5px;top:5px" width="12" height="11" viewBox="0 0 12 11"><path d="M0.8 1.5Q0.8 0.8 1.5 0.8H4.3L5.6 2.2H10.5Q11.2 2.2 11.2 2.9V9.3Q11.2 10 10.5 10H1.5Q0.8 10 0.8 9.3Z" fill="none" stroke="#fff" stroke-width="1.3"/></svg><span style="left:20px">是否同步</span></div>
<div class="a ob" style="left:173px;top:336px;width:51px;background:#1c8cf0"><svg class="oi" style="left:6px;top:5px" width="13" height="12" viewBox="0 0 13 12"><path d="M1.8 11 L9.6 3.2" stroke="#fff" stroke-width="2.8"/><path d="M0.8 1.8L3 3.2M4.3 0.6V2.6M7 1.2L5.6 2.8M10.4 5.6L11.8 6.8" stroke="#fff" stroke-width="1"/></svg><span style="left:21px">提现</span></div>
<div class="a ob" style="left:227px;top:336px;width:23px;background:#18bc9c"><svg class="oi" style="left:6px;top:5px" width="12" height="12" viewBox="0 0 12 12"><path d="M0.5 11.5L1.2 8.5L8.5 1.2L10.8 3.5L3.5 10.8Z" fill="#fff"/><path d="M9.3 0.5L11.5 2.7" stroke="#fff" stroke-width="1.6"/></svg></div>
<div class="a ob" style="left:254px;top:336px;width:21px;background:#f75444"><svg class="oi" style="left:5px;top:5px" width="11" height="12" viewBox="0 0 11 12"><path d="M0.5 1.8H10.5V3H0.5Z M3.5 0.3H7.5V1.8H3.5Z M1.5 3.3H9.5L9 11.8H2Z" fill="#fff"/><path d="M3.7 4.8V10.3M5.5 4.8V10.3M7.3 4.8V10.3" stroke="#f75444" stroke-width="0.9"/></svg></div>
<div class="a ob" style="left:16px;top:383px;width:75px;background:#1c8cf0"><svg class="oi" style="left:6px;top:5px" width="13" height="12" viewBox="0 0 13 12"><path d="M1.8 11 L9.6 3.2" stroke="#fff" stroke-width="2.8"/><path d="M0.8 1.8L3 3.2M4.3 0.6V2.6M7 1.2L5.6 2.8M10.4 5.6L11.8 6.8" stroke="#fff" stroke-width="1"/></svg><span style="left:21px">更新余额</span></div>
<div class="a ob" style="left:95px;top:383px;width:74px;background:#f39c12"><svg class="oi" style="left:5px;top:5px" width="12" height="11" viewBox="0 0 12 11"><path d="M0.8 1.5Q0.8 0.8 1.5 0.8H4.3L5.6 2.2H10.5Q11.2 2.2 11.2 2.9V9.3Q11.2 10 10.5 10H1.5Q0.8 10 0.8 9.3Z" fill="none" stroke="#fff" stroke-width="1.3"/></svg><span style="left:20px">是否同步</span></div>
<div class="a ob" style="left:173px;top:383px;width:51px;background:#1c8cf0"><svg class="oi" style="left:6px;top:5px" width="13" height="12" viewBox="0 0 13 12"><path d="M1.8 11 L9.6 3.2" stroke="#fff" stroke-width="2.8"/><path d="M0.8 1.8L3 3.2M4.3 0.6V2.6M7 1.2L5.6 2.8M10.4 5.6L11.8 6.8" stroke="#fff" stroke-width="1"/></svg><span style="left:21px">提现</span></div>
<div class="a ob" style="left:227px;top:383px;width:23px;background:#18bc9c"><svg class="oi" style="left:6px;top:5px" width="12" height="12" viewBox="0 0 12 12"><path d="M0.5 11.5L1.2 8.5L8.5 1.2L10.8 3.5L3.5 10.8Z" fill="#fff"/><path d="M9.3 0.5L11.5 2.7" stroke="#fff" stroke-width="1.6"/></svg></div>
<div class="a ob" style="left:254px;top:383px;width:21px;background:#f75444"><svg class="oi" style="left:5px;top:5px" width="11" height="12" viewBox="0 0 11 12"><path d="M0.5 1.8H10.5V3H0.5Z M3.5 0.3H7.5V1.8H3.5Z M1.5 3.3H9.5L9 11.8H2Z" fill="#fff"/><path d="M3.7 4.8V10.3M5.5 4.8V10.3M7.3 4.8V10.3" stroke="#f75444" stroke-width="0.9"/></svg></div>
<div class="a ob" style="left:16px;top:430px;width:75px;background:#1c8cf0"><svg class="oi" style="left:6px;top:5px" width="13" height="12" viewBox="0 0 13 12"><path d="M1.8 11 L9.6 3.2" stroke="#fff" stroke-width="2.8"/><path d="M0.8 1.8L3 3.2M4.3 0.6V2.6M7 1.2L5.6 2.8M10.4 5.6L11.8 6.8" stroke="#fff" stroke-width="1"/></svg><span style="left:21px">更新余额</span></div>
<div class="a ob" style="left:95px;top:430px;width:74px;background:#f39c12"><svg class="oi" style="left:5px;top:5px" width="12" height="11" viewBox="0 0 12 11"><path d="M0.8 1.5Q0.8 0.8 1.5 0.8H4.3L5.6 2.2H10.5Q11.2 2.2 11.2 2.9V9.3Q11.2 10 10.5 10H1.5Q0.8 10 0.8 9.3Z" fill="none" stroke="#fff" stroke-width="1.3"/></svg><span style="left:20px">是否同步</span></div>
<div class="a ob" style="left:173px;top:430px;width:51px;background:#1c8cf0"><svg class="oi" style="left:6px;top:5px" width="13" height="12" viewBox="0 0 13 12"><path d="M1.8 11 L9.6 3.2" stroke="#fff" stroke-width="2.8"/><path d="M0.8 1.8L3 3.2M4.3 0.6V2.6M7 1.2L5.6 2.8M10.4 5.6L11.8 6.8" stroke="#fff" stroke-width="1"/></svg><span style="left:21px">提现</span></div>
<div class="a ob" style="left:227px;top:430px;width:23px;background:#18bc9c"><svg class="oi" style="left:6px;top:5px" width="12" height="12" viewBox="0 0 12 12"><path d="M0.5 11.5L1.2 8.5L8.5 1.2L10.8 3.5L3.5 10.8Z" fill="#fff"/><path d="M9.3 0.5L11.5 2.7" stroke="#fff" stroke-width="1.6"/></svg></div>
<div class="a ob" style="left:254px;top:430px;width:21px;background:#f75444"><svg class="oi" style="left:5px;top:5px" width="11" height="12" viewBox="0 0 11 12"><path d="M0.5 1.8H10.5V3H0.5Z M3.5 0.3H7.5V1.8H3.5Z M1.5 3.3H9.5L9 11.8H2Z" fill="#fff"/><path d="M3.7 4.8V10.3M5.5 4.8V10.3M7.3 4.8V10.3" stroke="#f75444" stroke-width="0.9"/></svg></div>
<div class="a ob" style="left:16px;top:477px;width:75px;background:#1c8cf0"><svg class="oi" style="left:6px;top:5px" width="13" height="12" viewBox="0 0 13 12"><path d="M1.8 11 L9.6 3.2" stroke="#fff" stroke-width="2.8"/><path d="M0.8 1.8L3 3.2M4.3 0.6V2.6M7 1.2L5.6 2.8M10.4 5.6L11.8 6.8" stroke="#fff" stroke-width="1"/></svg><span style="left:21px">更新余额</span></div>
<div class="a ob" style="left:95px;top:477px;width:74px;background:#f39c12"><svg class="oi" style="left:5px;top:5px" width="12" height="11" viewBox="0 0 12 11"><path d="M0.8 1.5Q0.8 0.8 1.5 0.8H4.3L5.6 2.2H10.5Q11.2 2.2 11.2 2.9V9.3Q11.2 10 10.5 10H1.5Q0.8 10 0.8 9.3Z" fill="none" stroke="#fff" stroke-width="1.3"/></svg><span style="left:20px">是否同步</span></div>
<div class="a ob" style="left:173px;top:477px;width:51px;background:#1c8cf0"><svg class="oi" style="left:6px;top:5px" width="13" height="12" viewBox="0 0 13 12"><path d="M1.8 11 L9.6 3.2" stroke="#fff" stroke-width="2.8"/><path d="M0.8 1.8L3 3.2M4.3 0.6V2.6M7 1.2L5.6 2.8M10.4 5.6L11.8 6.8" stroke="#fff" stroke-width="1"/></svg><span style="left:21px">提现</span></div>
<div class="a ob" style="left:227px;top:477px;width:23px;background:#18bc9c"><svg class="oi" style="left:6px;top:5px" width="12" height="12" viewBox="0 0 12 12"><path d="M0.5 11.5L1.2 8.5L8.5 1.2L10.8 3.5L3.5 10.8Z" fill="#fff"/><path d="M9.3 0.5L11.5 2.7" stroke="#fff" stroke-width="1.6"/></svg></div>
<div class="a ob" style="left:254px;top:477px;width:21px;background:#f75444"><svg class="oi" style="left:5px;top:5px" width="11" height="12" viewBox="0 0 11 12"><path d="M0.5 1.8H10.5V3H0.5Z M3.5 0.3H7.5V1.8H3.5Z M1.5 3.3H9.5L9 11.8H2Z" fill="#fff"/><path d="M3.7 4.8V10.3M5.5 4.8V10.3M7.3 4.8V10.3" stroke="#f75444" stroke-width="0.9"/></svg></div>
</div>
<div class="a" style="left:0;top:511px;width:1629px;height:18px;background:#f1f1f1"></div>
<div class="a" style="left:17px;top:514px;width:1387px;height:13px;background:#c1c1c1"></div>
<div class="a" style="left:6px;top:516px;width:0;height:0;border-top:4.5px solid transparent;border-bottom:4.5px solid transparent;border-right:4px solid #a3a3a3"></div>
<div class="a" style="left:1620px;top:516px;width:0;height:0;border-top:4px solid transparent;border-bottom:4px solid transparent;border-left:4px solid #505050"></div>
</div>
<div class="a" style="left:260px;top:822px;color:#333;font-size:14px;line-height:20px">显示第 1 到第 10 条记录<span style="display:inline-block;width:14px;padding-left:1px">,</span>总共 41 条记录 每页显示</div>
<div class="a btn" style="left:583px;top:817px;width:52px;height:33px;background:#f4f4f4;border:1px solid #ddd;color:#333;text-align:left;padding-left:13px">10</div>
<div class="a" style="left:614px;top:831px;width:0;height:0;border-left:4px solid transparent;border-right:4px solid transparent;border-bottom:4px solid #333"></div>
<div class="a" style="left:640px;top:822px;color:#333;font-size:14px;line-height:20px">条记录</div>
<div class="a pgb" style="left:1479px;width:68px">上一页</div>
<div class="a pgb" style="left:1546px;width:34px;background:#444c69;border-color:#444c69;color:#fff">1</div>
<div class="a pgb" style="left:1580px;width:33px">2</div>
<div class="a pgb" style="left:1612px;width:34px">3</div>
<div class="a pgb" style="left:1645px;width:34px">4</div>
<div class="a pgb" style="left:1678px;width:34px">5</div>
<div class="a pgb" style="left:1711px;width:68px">下一页</div>
<div class="a" style="left:1783px;top:815px;width:50px;height:33px;border:1px solid #d2d6de;background:#fff"></div>
<div class="a btn" style="left:1838px;top:816px;width:52px;height:33px;background:#f4f4f4;border:1px solid #ddd;color:#333">跳转</div>
</div><!--/pc-->
</body></html>
